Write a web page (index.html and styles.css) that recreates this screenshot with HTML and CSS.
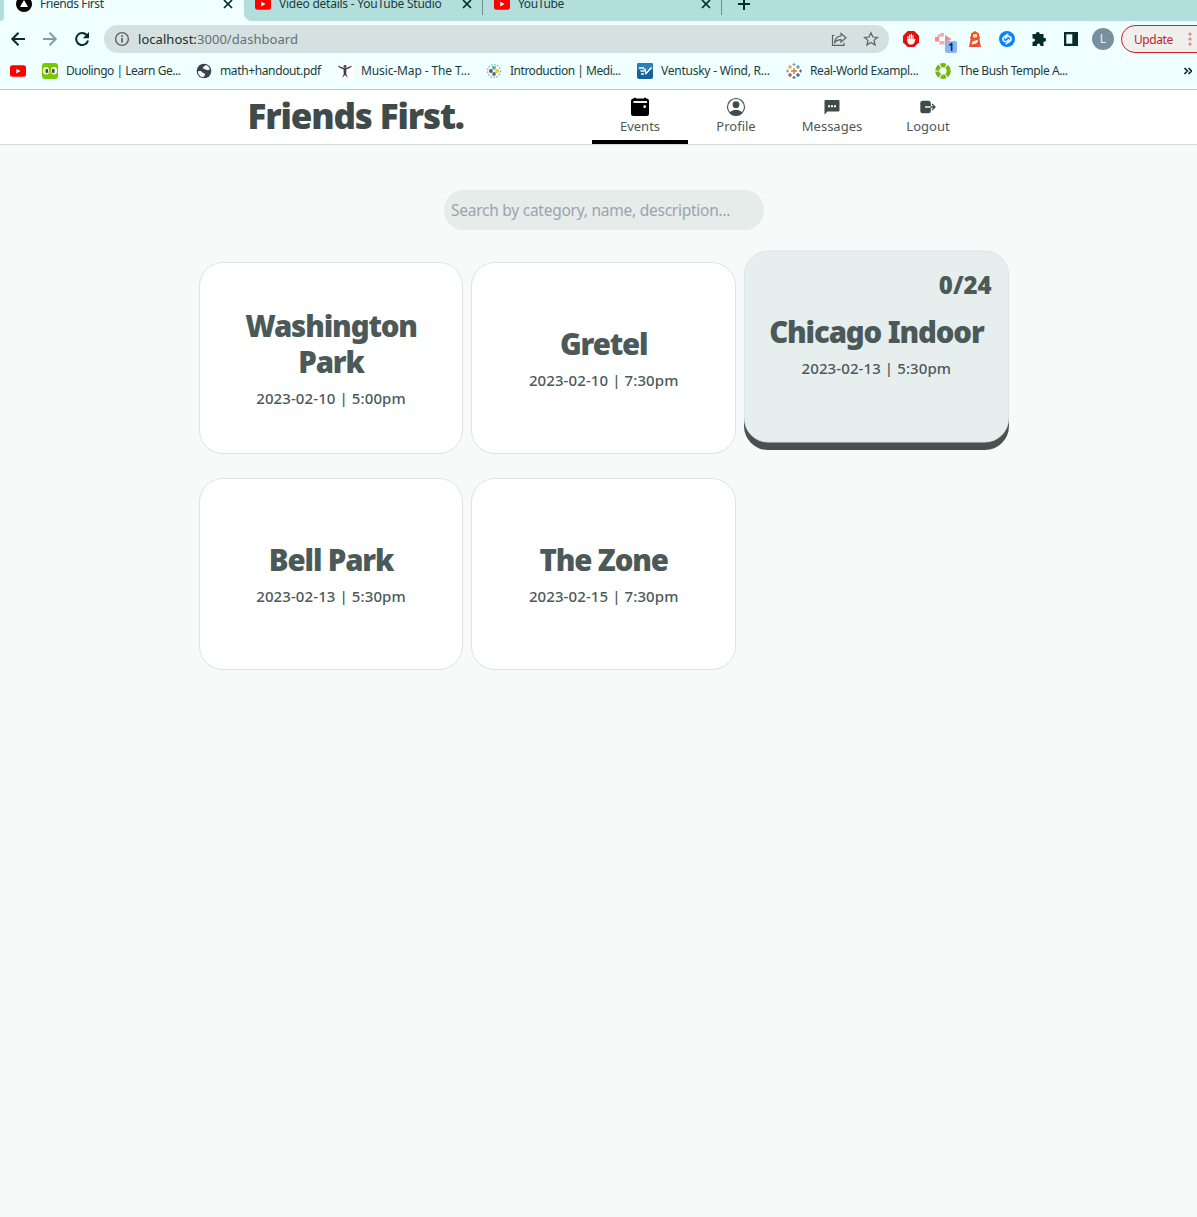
FILE: index.html
```html
<!DOCTYPE html>
<html lang="en">
<head>
<meta charset="utf-8">
<title>Friends First</title>
<link rel="stylesheet" href="styles.css">
</head>
<body>
<div class="browser">
  <div class="tabstrip">
    <div class="edge"></div>
    <div class="tab active">
      <svg width="16" height="16" viewBox="0 0 16 16"><circle cx="8" cy="8" r="8"/><path d="M8 4l4 7H4z" fill="#fff"/></svg>
      <span class="tab-title ls-4">Friends First</span>
      <svg class="x" width="10" height="10" viewBox="0 0 10 10"><path d="M1 1l8 8M9 1L1 9"/></svg>
    </div>
    <div class="tabs-rest">
      <div class="tab inactive">
        <svg width="16" height="16" viewBox="0 0 16 16"><use href="#yt"/></svg>
        <span class="tab-title ls-2">Video details - YouTube Studio</span>
        <svg class="x" width="10" height="10" viewBox="0 0 10 10"><path d="M1 1l8 8M9 1L1 9"/></svg>
      </div>
      <div class="tab inactive">
        <svg width="16" height="16" viewBox="0 0 16 16"><use href="#yt"/></svg>
        <span class="tab-title ls-3">YouTube</span>
        <svg class="x" width="10" height="10" viewBox="0 0 10 10"><path d="M1 1l8 8M9 1L1 9"/></svg>
      </div>
      <svg class="plus" width="12" height="12" viewBox="0 0 12 12"><path d="M6 0v12M0 6h12"/></svg>
    </div>
  </div>

  <div class="toolbar">
    <div class="nav-buttons">
      <svg width="16" height="16" viewBox="0 0 16 16" class="ink"><path d="M15 8H2.500M8.500 1.800L2.300 8l6.200 6.200"/></svg>
      <svg width="16" height="16" viewBox="0 0 16 16" class="ink dim"><path d="M1 8h12.500M7.500 1.800L13.700 8l-6.200 6.200"/></svg>
      <svg width="16" height="16" viewBox="0 0 16 16" class="ink"><path d="M14 9.500A6 6 0 1 1 12.600 4"/><path d="M15 1v6.200H8.800z" fill="#052b2b" stroke="none"/></svg>
    </div>
    <div class="omnibox">
      <svg width="16" height="16" viewBox="0 0 16 16"><circle cx="8" cy="8" r="6.400" fill="none" stroke="#5a6365" stroke-width="1.400"/><path d="M7.200 7h1.700v4.600H7.200zM7.200 4.200h1.700v1.700H7.200z" fill="#5a6365"/></svg>
      <span class="url"><b>localhost:</b>3000/dashboard</span>
      <svg width="16" height="16" viewBox="0 0 16 16" class="thin"><path d="M3.500 4.500h-2v9.800h11.500v-2.500"/><path d="M10 2.500L15 6.800 10 11V8.600C7 8.600 5.200 9.500 3.700 11.500 4 8 6 5.300 10 5z"/></svg>
      <svg width="16" height="16" viewBox="0 0 16 16" class="thin"><path d="M8 1.700l1.900 4.300 4.600.4-3.500 3 1.100 4.600L8 11.500 3.900 14 5 9.400l-3.500-3L6.100 6z"/></svg>
    </div>
    <div class="extensions">
      <svg width="16" height="16" viewBox="0 0 16 16"><path d="M4.700 0h6.600L16 4.700v6.600L11.300 16H4.700L0 11.300V4.700z" fill="#e3100f"/><path d="M5 5.500v4M6.700 4v5M8.400 3.300v5M10 4.500v5" stroke="#fff" stroke-width="1.200" stroke-linecap="round"/><path d="M4.400 8h6.200v1.500l1-1.700 1 .4-1.200 3c-.5 1.500-1.600 2.400-3.300 2.400-2.200 0-3.700-1.400-3.700-3.400z" fill="#fff"/></svg>
      <span class="ext-badge"><svg width="17" height="16" viewBox="0 0 17 16"><path d="M0 6h4v4.500H0zM10 4l6.500 4-6.500 3.500z" fill="#f8898b"/><path d="M2.500 3.500h3V6h-3zM5 2h4v3.500H5zM4.500 10h5v3.500h-5z" fill="#fba9aa"/></svg><span class="badge">1</span></span>
      <svg width="16" height="16" viewBox="0 0 16 16"><path d="M8 0l4 2.500v3h1v2h-.7L14 16H2l1.700-8.500H3v-2h1v-3z" fill="#ee4e32"/><path d="M6 3h4v3.500H6z" fill="#ffdf80"/><path d="M5.200 10.800L10.500 8.800l.3 2-1.800 1.700-4.300 1z" fill="#fff"/></svg>
      <svg width="16" height="16" viewBox="0 0 16 16"><circle cx="8" cy="8" r="8" fill="#0884ff"/><g fill="none" stroke="#fff" stroke-width="1.600" stroke-linecap="round"><path d="M8.700 3.300L5 6C3.500 7.200 3.700 9 4.800 10s2.700.8 3.700-.1L9.700 8.700"/><path d="M7.300 12.700L11 10c1.500-1.200 1.300-3 .2-4s-2.700-.8-3.700.1L6.300 7.300"/></g></svg>
      <svg width="16" height="16" viewBox="0 0 16 16"><path d="M4.800 3a2 2 0 0 1 4 0h3.700v3.700h.6a2 2 0 0 1 0 4h-.6V15H9.300v-.7a1.700 1.700 0 0 0-3.400 0v.7H1.500v-4.200h.8a1.700 1.700 0 0 0 0-3.400h-.8V3z" fill="#052b2b"/></svg>
      <svg width="16" height="16" viewBox="0 0 16 16"><path d="M1 1h14v14H1z" fill="#052b2b"/><path d="M3.300 3.300h6v9.400h-6z" fill="#f0ffff"/></svg>
      <span class="avatar">L</span>
    </div>
    <div class="update"><span class="ls-4">Update</span><svg width="4" height="14" viewBox="0 0 4 14" fill="#f07f7a"><circle cx="2" cy="2" r="1.500"/><circle cx="2" cy="7" r="1.500"/><circle cx="2" cy="12" r="1.500"/></svg></div>
  </div>

  <div class="bookmarks">
    <div class="bm"><svg width="16" height="16" viewBox="0 0 16 16"><g id="yt"><rect y="2.300" width="16" height="11.500" rx="2.500" fill="#f00"/><path d="M6.300 5.700v4.700L10.500 8z" fill="#fff"/></g></svg></div>
    <div class="bm"><svg width="16" height="16" viewBox="0 0 16 16"><rect width="16" height="16" rx="3" fill="#74c900"/><rect x="1" y="4" width="6" height="7.500" rx="3" fill="#e8ffd0"/><rect x="9" y="4" width="6" height="7.500" rx="3" fill="#e8ffd0"/><rect x="3.500" y="6" width="2.500" height="4" rx="1" fill="#445"/><rect x="10" y="6" width="2.500" height="4" rx="1" fill="#445"/><path d="M6 8.500h4L8 12z" fill="#f9a91b"/></svg><span class="ls-5" style="width:114px">Duolingo | Learn Ge...</span></div>
    <div class="bm"><svg width="16" height="16" viewBox="0 0 16 16"><circle cx="8" cy="8" r="7.300" fill="#3c4248"/><path d="M2 8.500c2-1 4 0 4.500 1s2 .5 2.500 1.500-1 2-1.500 3.200C4 14 2 11.500 2 8.500zM7 4.500c.5-1.300 2-1.500 3-2.500 2 .8 3.500 2.500 3.800 4.500-1.300.8-2.500 1-3.500.3s-3.800-.6-3.300-2.300z" fill="#f0ffff"/></svg><span class="ls-3" style="width:101px">math+handout.pdf</span></div>
    <div class="bm"><svg width="16" height="16" viewBox="0 0 16 16"><path d="M0 0h16v16H0z" fill="#fff"/><circle cx="8" cy="3.300" r="1.400" fill="#394346"/><path d="M.8 2.500C3 2.800 4.500 4.500 6.500 4.800h3c2-.3 3.500-2 5.700-2.300-1.500 2.700-3.700 3.200-5.700 3.700l-.3 4.800L11 15 8 12l-3 3 1.800-4-.3-4.800C4.500 5.700 2.300 5.200.8 2.500z" fill="#394346"/></svg><span class="ls-1" style="width:109px">Music-Map - The T...</span></div>
    <div class="bm"><svg width="16" height="16" viewBox="0 0 16 16"><circle cx="8" cy="8" r="6.500" fill="none" stroke="#8ab6a6" stroke-width="1.400" stroke-dasharray="1.500 1.500"/><circle cx="8" cy="4.800" r="2" fill="#55b3b3"/><circle cx="4.900" cy="8" r="1.900" fill="#744b65"/><circle cx="11.100" cy="8" r="2" fill="#ecc92e"/><circle cx="8" cy="11" r="1.900" fill="#58745c"/></svg><span class="ls-5" style="width:111px">Introduction | Medi...</span></div>
    <div class="bm"><svg width="16" height="16" viewBox="0 0 16 16"><rect width="16" height="16" rx="2" fill="#19619a"/><path d="M2 0h12a2 2 0 0 1 2 2v5H0V2a2 2 0 0 1 2-2z" fill="#2b80b8"/><path d="M2 5h5M3.500 8H7M4 11h3M7.500 5.500l1.500 5 5.500-6" fill="none" stroke="#fff" stroke-width="1.600"/></svg><span class="ls-2" style="width:109px">Ventusky - Wind, R...</span></div>
    <div class="bm"><svg width="16" height="16" viewBox="0 0 16 16" fill="none" stroke-width="1.100"><path d="M8 5v6M5 8h6" stroke="#eb762c" stroke-width="1.400"/><path d="M8 0v3M6.500 1.500h3M0 8h3M1.500 6.500v3" stroke="#75a2b5"/><path d="M8 13v3M6.500 14.500h3M13 8h3M14.500 6.500v3" stroke="#4a5f8a"/><path d="M4 2v4M2 4h4" stroke="#e8912c"/><path d="M4 10v4M2 12h4" stroke="#c72035"/><path d="M12 2v4M10 4h4" stroke="#59879b"/><path d="M12 10v4M10 12h4" stroke="#1f457e"/></svg><span class="ls-3" style="width:109px">Real-World Exampl...</span></div>
    <div class="bm"><svg width="16" height="16" viewBox="0 0 16 16"><circle cx="8" cy="8" r="5.800" fill="none" stroke="#76b80e" stroke-width="4.200" stroke-dasharray="5 1.070"/></svg><span class="ls-4" style="width:109px">The Bush Temple A...</span></div>
    <svg class="more" width="8" height="8" viewBox="0 0 8 8"><path d="M.5 1l3 3-3 3M4.500 1l3 3-3 3"/></svg>
  </div>
</div>

<header class="site-header">
  <h1>Friends First.</h1>
  <nav>
    <a class="current"><svg width="20" height="20" viewBox="0 0 20 20"><path d="M4 .7h2V3H4zM14 .7h2V3h-2z"/><rect x="1" y="1.500" width="18" height="17.500" rx="2.500"/><path d="M3.500 5h13.500" stroke="#fff" stroke-width="1.900"/><circle cx="14.700" cy="9.700" r="1.400" fill="#fff"/></svg>Events</a>
    <a><svg width="20" height="20" viewBox="0 0 20 20"><circle cx="10" cy="10" r="8.500" fill="none" stroke="#3f4b4b" stroke-width="1.100"/><circle cx="10" cy="7.700" r="3.400"/><path d="M4 15.500c1.500-2 3.500-2.800 6-2.800s4.500.8 6 2.800c-1.500 1.900-3.500 3-6 3s-4.500-1.100-6-3z"/></svg>Profile</a>
    <a><svg width="20" height="20" viewBox="0 0 20 20"><path d="M3.500 3h13a1 1 0 0 1 1 1v9.500a1 1 0 0 1-1 1H5.500l-3 3V4a1 1 0 0 1 1-1z"/><path d="M6 8.200h2v2H6zM9 8.200h2v2H9zM12 8.200h2v2h-2z" fill="#fff"/></svg>Messages</a>
    <a><svg width="20" height="20" viewBox="0 0 20 20"><rect x="2.300" y="3.700" width="10.500" height="12.600" rx="2.500"/><path d="M7 10h6" stroke="#fff" stroke-width="1.400"/><path d="M12.500 10h4.500M14 7l3 3-3 3" fill="none" stroke="#3f4b4b" stroke-width="1.300"/></svg>Logout</a>
  </nav>
</header>

<main>
  <div class="search">Search by category, name, description...</div>
  <section class="cards">
    <article class="card"><h2>Washington Park</h2><p>2023-02-10 | 5:00pm</p></article>
    <article class="card"><h2>Gretel</h2><p>2023-02-10 | 7:30pm</p></article>
    <article class="card hovered"><span class="count">0/24</span><h2>Chicago Indoor</h2><p>2023-02-13 | 5:30pm</p></article>
    <article class="card"><h2>Bell Park</h2><p>2023-02-13 | 5:30pm</p></article>
    <article class="card"><h2>The Zone</h2><p>2023-02-15 | 7:30pm</p></article>
  </section>
</main>
</body>
</html>
```
FILE: styles.css
```css
* { box-sizing: border-box; }
body {
  margin: 0;
  min-height: 1217px;
  background: #f6faf9;
  color: #4b5a59;
  font-family: "Noto Sans", "Open Sans", sans-serif;
  overflow: hidden;
}
svg { display: block; flex: none; }
.browser { height: 90px; background: #f0ffff; border-bottom: 1px solid #b7cdce; color: #1d3b3c; font-size: 12px; }

/* tracking steps for the toolbar labels */
.ls-1 { letter-spacing: -.12px; }
.ls-2 { letter-spacing: -.24px; }
.ls-3 { letter-spacing: -.37px; }
.ls-4 { letter-spacing: -.42px; }
.ls-5 { letter-spacing: -.48px; }

.tabstrip { display: flex; height: 21px; overflow: hidden; }
.edge { width: 4px; background: #b2dfdc; border-bottom-right-radius: 6px; }
.tab { display: flex; align-items: center; height: 34px; margin-top: -13px; padding-left: 12px; }
.tab-title { width: 183px; margin-left: 8px; white-space: nowrap; line-height: 16px; }
.active { width: 240px; }
.tabs-rest { flex: 1; display: flex; background: #b2dfdc; border-bottom-left-radius: 8px; }
.inactive { width: 239px; height: 28px; padding: 6px 0 0 11px; border-right: 1px solid #69908f; }
.x, .plus { fill: none; stroke: #052b2b; stroke-width: 1.700; }
.plus { margin: -2px 0 0 16px; stroke-width: 2; }

.toolbar { display: flex; align-items: center; height: 36px; padding-left: 10px; }
.nav-buttons { display: flex; flex: none; gap: 16px; width: 94px; }
.ink { fill: none; stroke: #052b2b; stroke-width: 2; }
.dim { opacity: .45; }
.omnibox { display: flex; flex: none; align-items: center; width: 785px; height: 28px; padding: 0 10px; border-radius: 14px; background: #d5e0e0; gap: 16px; }
.url { flex: 1; margin-left: -8px; font-size: 13px; letter-spacing: .05px; color: #637072; }
.url b { font-weight: 400; color: #1d2c2d; }
.thin { fill: none; stroke: #5a6365; stroke-width: 1.200; }
.extensions { display: flex; flex: none; align-items: center; gap: 16px; margin-left: 14px; }
.ext-badge { position: relative; width: 16px; }
.badge { position: absolute; left: 10px; top: 10px; width: 12px; height: 12px; border-radius: 2px; background: #8ab4f8; color: #123; font: bold 10px/12px "Noto Sans", sans-serif; text-align: center; }
.avatar { width: 22px; height: 22px; margin-left: -3px; border-radius: 50%; background: #78909c; color: #e9f2f4; font-size: 12px; line-height: 22px; text-align: center; }
.update { display: flex; align-items: center; width: 90px; height: 28px; margin-left: 7px; padding-left: 12px; border: 1px solid #d31f25; border-radius: 14px; background: #efefed; color: #c5221f; flex: none; }
.update svg { margin-left: 15px; }

.bookmarks { display: flex; align-items: center; gap: 16px; height: 28px; padding-left: 10px; }
.bm { display: flex; align-items: center; gap: 8px; flex: none; }
.bm > span { white-space: nowrap; line-height: 16px; padding-bottom: 1px; }
.more { margin-left: 100px; fill: none; stroke: #052b2b; stroke-width: 1.600; }

.site-header { display: flex; height: 55px; padding-left: 247.500px; background: #fff; border-bottom: 1px solid #d5dddc; }
h1 { width: 344.500px; margin: 0; font-size: 35px; font-weight: 900; letter-spacing: -1.150px; line-height: 52px; color: #3f4b4b; white-space: nowrap; }
nav { display: flex; }
nav a { display: flex; flex-direction: column; align-items: center; width: 96px; height: 54px; padding-top: 7px; color: #4b5a59; font-size: 13px; line-height: 18px; }
nav svg { fill: #3f4b4b; }
.current { border-bottom: 4px solid #000; }
nav .current svg { fill: #000; }

main { width: 810px; margin: 45px 0 0 198.700px; }
.search { width: 320px; height: 40px; margin-left: 245.300px; padding-left: 7px; border-radius: 20px; background: #e6ecea; color: #9ca3af; font-size: 15.500px; letter-spacing: -.25px; line-height: 41px; white-space: nowrap; }
.cards { display: grid; grid-template-columns: repeat(3, 1fr); grid-auto-rows: 192px; gap: 24px 8px; margin-top: 32px; }
.card { position: relative; display: flex; flex-direction: column; justify-content: center; align-items: center; padding: 2px 16px 0; border: 1px solid #dfe3e2; border-radius: 24px; background: #fff; text-align: center; }
.hovered { padding-top: 0; background: #e7efee; transform: translateY(-11.500px); box-shadow: 0 7.500px 0 #4a5250; }
h2 { margin: 0; font-size: 29.400px; font-weight: 900; letter-spacing: -1.150px; line-height: 36px; }
p { margin: 6px 0 0; font-size: 15px; font-weight: 500; letter-spacing: .1px; line-height: 24px; }
.count { position: absolute; top: 17px; right: 16px; font-size: 24px; font-weight: 900; letter-spacing: 0; line-height: 32px; }
```
